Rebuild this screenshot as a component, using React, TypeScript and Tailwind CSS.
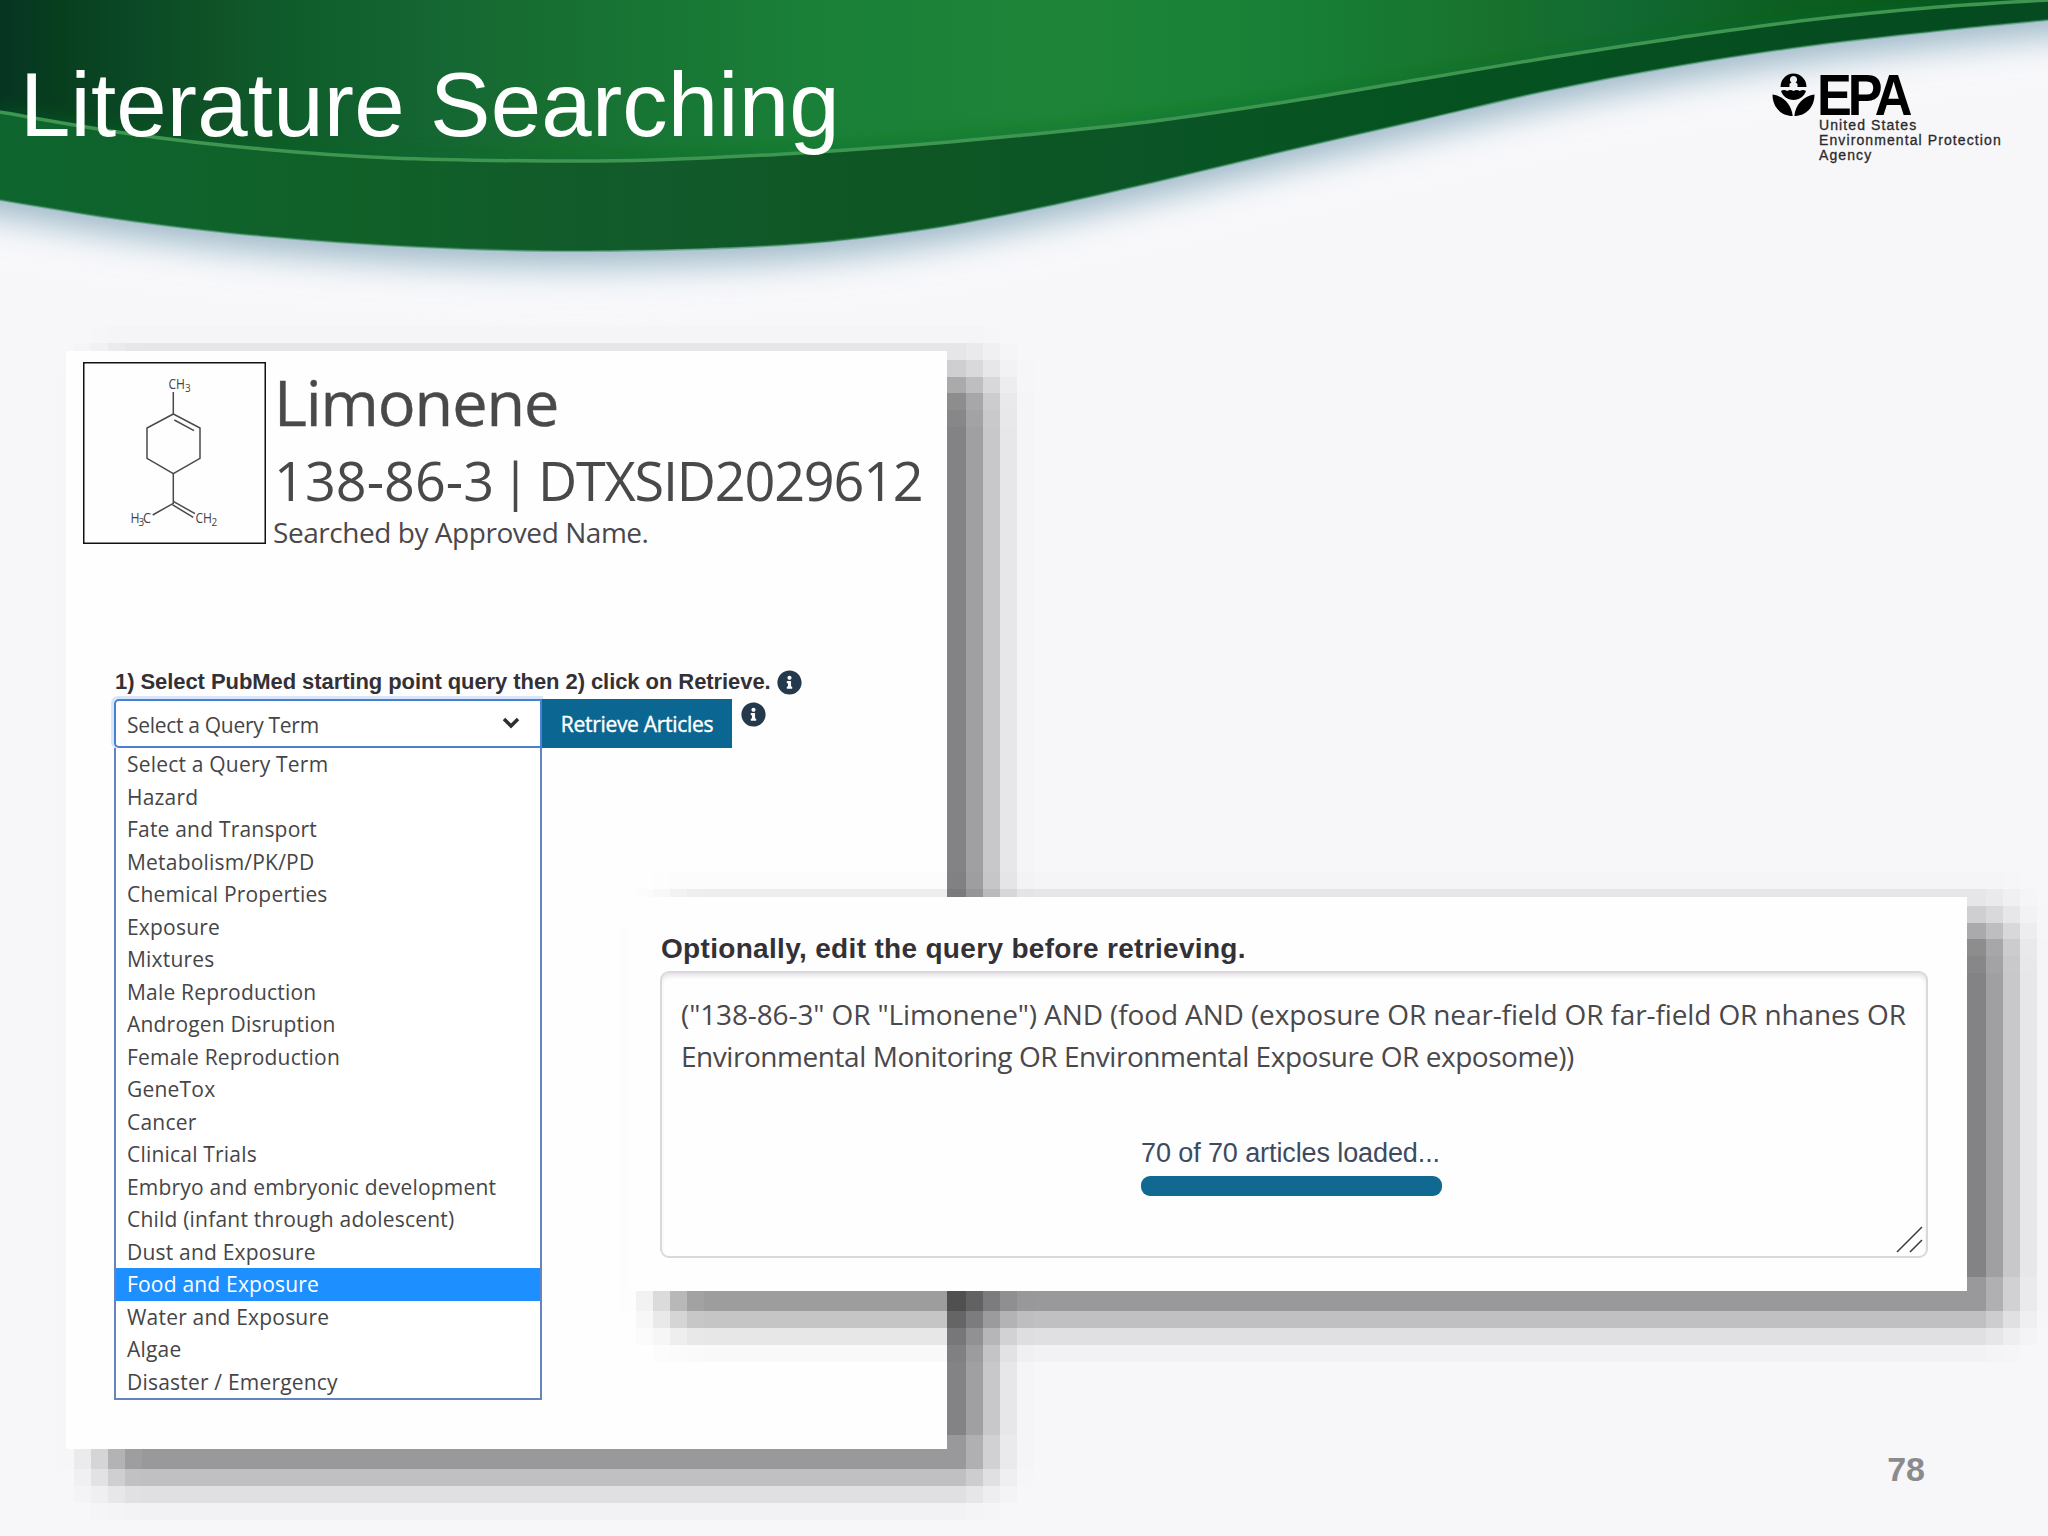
import * as React from "react";
import { FaInfoCircle } from "react-icons/fa";

const QUERY_TERMS = [
  "Select a Query Term",
  "Hazard",
  "Fate and Transport",
  "Metabolism/PK/PD",
  "Chemical Properties",
  "Exposure",
  "Mixtures",
  "Male Reproduction",
  "Androgen Disruption",
  "Female Reproduction",
  "GeneTox",
  "Cancer",
  "Clinical Trials",
  "Embryo and embryonic development",
  "Child (infant through adolescent)",
  "Dust and Exposure",
  "Food and Exposure",
  "Water and Exposure",
  "Algae",
  "Disaster / Emergency",
];

const SELECTED_TERM = "Food and Exposure";

type Point = [number, number];

const OUTER_EDGE: Point[] = [
  [0, 200],
  [131, 221],
  [261, 236],
  [420, 247],
  [588, 251],
  [784, 245],
  [914, 231],
  [1024, 211],
  [1155, 182],
  [1285, 151],
  [1416, 121],
  [1546, 91],
  [1677, 66],
  [1808, 46],
  [1938, 31],
  [2048, 20],
];

const INNER_EDGE: Point[] = [
  [0, 112],
  [131, 134],
  [261, 149],
  [392, 158],
  [549, 161],
  [653, 160],
  [784, 154],
  [914, 145],
  [1024, 135],
  [1155, 121],
  [1285, 102],
  [1416, 80],
  [1546, 58],
  [1677, 38],
  [1808, 20],
  [1938, 7],
  [2048, 0],
];

// Catmull-Rom spline through the points, as cubic segments
function smoothPath(points: Point[]) {
  const segments = points.slice(0, -1).map((p1, i) => {
    const p0 = points[i - 1] ?? p1;
    const p2 = points[i + 1];
    const p3 = points[i + 2] ?? p2;

    const c1 = [p1[0] + (p2[0] - p0[0]) / 6, p1[1] + (p2[1] - p0[1]) / 6];
    const c2 = [p2[0] - (p3[0] - p1[0]) / 6, p2[1] - (p3[1] - p1[1]) / 6];
    return `C${c1.join(" ")} ${c2.join(" ")} ${p2.join(" ")}`;
  });

  return `M${points[0].join(" ")} ${segments.join(" ")}`;
}

type Step = [alpha: number, until: string];

function stepGradient(direction: string, steps: Step[]) {
  let from = "0px";
  const stops = steps.map(([alpha, until]) => {
    const stop = `rgba(0,0,0,${alpha}) ${from} ${until}`;
    from = until;
    return stop;
  });
  return `linear-gradient(${direction}, ${stops.join(", ")})`;
}

const SHADOW_MASK = [
  stepGradient("to right", [
    [0.01, "17px"],
    [0.12, "34px"],
    [0.36, "51px"],
    [0.72, "68px"],
    [0.95, "85px"],
    [1, "calc(100% - 68px)"],
    [0.75, "calc(100% - 51px)"],
    [0.4, "calc(100% - 34px)"],
    [0.13, "calc(100% - 17px)"],
    [0.02, "100%"],
  ]),
  stepGradient("to bottom", [
    [0.02, "17px"],
    [0.14, "34px"],
    [0.34, "51px"],
    [0.66, "67px"],
    [0.91, "84px"],
    [0.97, "101px"],
    [1, "calc(100% - 85px)"],
    [0.81, "calc(100% - 51px)"],
    [0.48, "calc(100% - 34px)"],
    [0.19, "calc(100% - 17px)"],
    [0.04, "100%"],
  ]),
].join(", ");

function BlockShadow() {
  return (
    <div
      className="absolute -z-10 -left-[9px] -top-[25px] -right-[87px] -bottom-[71px] bg-black/47 [mask-composite:intersect]"
      style={{ maskImage: SHADOW_MASK }}
    />
  );
}

function Swoosh() {
  const outer = smoothPath(OUTER_EDGE);
  const inner = smoothPath(INNER_EDGE);

  return (
    <svg
      className="absolute inset-0 -z-10 h-[340px] w-[2048px]"
      viewBox="0 0 2048 340"
      fill="none"
    >
      <defs>
        <linearGradient id="top" x1="0" y1="0" x2="2048" y2="0" gradientUnits="userSpaceOnUse">
          <stop offset="0" stopColor="#063523" />
          <stop offset="0.03" stopColor="#073f1e" />
          <stop offset="0.06" stopColor="#0a4825" />
          <stop offset="0.11" stopColor="#105427" />
          <stop offset="0.15" stopColor="#0f5e2c" />
          <stop offset="0.22" stopColor="#156733" />
          <stop offset="0.26" stopColor="#176e31" />
          <stop offset="0.33" stopColor="#187735" />
          <stop offset="0.4" stopColor="#1a8038" />
          <stop offset="0.52" stopColor="#1e8538" />
          <stop offset="0.63" stopColor="#178036" />
          <stop offset="0.73" stopColor="#18722d" />
          <stop offset="0.79" stopColor="#126a33" />
          <stop offset="0.87" stopColor="#0d5f22" />
          <stop offset="1" stopColor="#04501a" />
        </linearGradient>
        <linearGradient id="band" x1="0" y1="0" x2="2048" y2="0" gradientUnits="userSpaceOnUse">
          <stop offset="0" stopColor="#0e652e" />
          <stop offset="0.18" stopColor="#106028" />
          <stop offset="0.32" stopColor="#125a2b" />
          <stop offset="0.42" stopColor="#0e5724" />
          <stop offset="0.55" stopColor="#0b5526" />
          <stop offset="0.68" stopColor="#055320" />
          <stop offset="1" stopColor="#054a20" />
        </linearGradient>
        <filter id="soft" x="-10%" y="-20%" width="120%" height="150%">
          <feGaussianBlur stdDeviation="17" />
        </filter>
        <filter id="glow" x="-10%" y="-20%" width="120%" height="150%">
          <feGaussianBlur stdDeviation="24" />
        </filter>
        <filter id="shade" x="-10%" y="-20%" width="120%" height="150%">
          <feGaussianBlur stdDeviation="7" />
        </filter>
        <clipPath id="inside">
          <path d={`${inner} L2048 0 L0 0 Z`} />
        </clipPath>
      </defs>
      <g transform="translate(0 36)" filter="url(#glow)">
        <path d={`${outer} L2148 0 L2148 -90 L-100 -90 L-100 190 Z`} fill="#fdfeff" />
      </g>
      <g transform="translate(0 17)" filter="url(#soft)">
        <path
          d={`${outer} L2148 14 L2148 -90 L-100 -90 L-100 184 Z`}
          fill="#8faebf"
          fillOpacity="0.85"
        />
      </g>
      <path d={`${outer} L2048 0 L0 0 Z`} fill="url(#band)" />
      <path d={`${inner} L2048 0 L0 0 Z`} fill="url(#top)" />
      <g clipPath="url(#inside)">
        <path d={inner} stroke="#0a6a14" strokeOpacity="0.3" strokeWidth="16" filter="url(#shade)" />
      </g>
      <path d={inner} stroke="#3f9650" strokeWidth="3.5" />
      <path d={outer} stroke="#3d8f62" strokeOpacity="0.55" strokeWidth="2" />
    </svg>
  );
}

function EpaLogo() {
  return (
    <div className="flex gap-[4px] font-['Liberation_Sans',sans-serif] text-black">
      <svg className="mt-[1px] h-[43px] w-[43px] shrink-0" viewBox="0 0 43 43">
        <path
          d="M8.5 14 A13 13.500 0 0 1 34.5 14 H25.500 V11 Q24.500 9.800 23.500 9.500 A3.600 3.600 0 1 0 19.500 9.500 Q18.500 9.800 17.500 11 V14 Z"
          fill="#000"
        />
        <path
          d="M9 18 Q12 16 15.2 18 Q18.400 16 21.500 18 Q24.600 16 27.800 18 Q31 16 34 18 C32 23.500 27.500 27 21.500 27 C15.500 27 11 23.500 9 18 Z"
          fill="#000"
        />
        <path d="M0.500 21.500 C11 23 19.500 31 20.700 43 C9 43 0.500 34 0.500 21.500 Z" fill="#000" />
        <path d="M42.500 21.500 C32 23 23.500 31 22.300 43 C34 43 42.500 34 42.500 21.500 Z" fill="#000" />
      </svg>
      <div>
        <p className="-ml-[2px] h-[45px] w-[98px] origin-left scale-x-[0.9] text-[58px] leading-[46px] font-bold tracking-[-4.5px]">
          EPA
        </p>
        <p className="pt-[1px] text-[14px] leading-[15px] tracking-[1.1px] whitespace-nowrap text-[#2a2a2a] [-webkit-text-stroke:0.3px_#2a2a2a]">
          United States
          <br />
          Environmental Protection
          <br />
          Agency
        </p>
      </div>
    </div>
  );
}

function Structure() {
  return (
    <svg
      className="h-[182px] w-[183px] shrink-0 font-['Open_Sans',sans-serif]"
      viewBox="0 0 183 182"
      fill="none"
    >
      <rect x="0.75" y="0.75" width="181.500" height="180.500" stroke="#111" strokeWidth="1.500" />
      <g stroke="#4a4a4a" strokeWidth="1.500">
        <path d="M90.300 30V52L117 66V96.300L90.300 111.700L64 96.300V66L90.300 52" />
        <path d="M91.300 58L111 68.700" />
        <path d="M90.300 111.700V141.300L69.700 153" />
        <path d="M90.300 139.300L112 151.700M89.300 142.700L110.300 155.300" />
      </g>
      <g fill="#444" fontSize="14">
        <text x="85.500" y="27" textLength="16.500" lengthAdjust="spacingAndGlyphs">
          CH
        </text>
        <text x="102" y="30" fontSize="10">
          3
        </text>
        <text x="47.500" y="161" textLength="9" lengthAdjust="spacingAndGlyphs">
          H
        </text>
        <text x="55.500" y="164" fontSize="10">
          3
        </text>
        <text x="60" y="161" textLength="8" lengthAdjust="spacingAndGlyphs">
          C
        </text>
        <text x="112.500" y="161" textLength="16.500" lengthAdjust="spacingAndGlyphs">
          CH
        </text>
        <text x="128.500" y="164" fontSize="10">
          2
        </text>
      </g>
    </svg>
  );
}

function QuerySelect() {
  return (
    <div className="w-[428px] text-[21px] text-[#454548]">
      <div className="flex h-[49px] items-center justify-between rounded-l-[5px] border-2 border-[#4a80d0] bg-white pr-[20px] pl-[11px] shadow-[-1px_-1px_0_2px_#d8e6fa]">
        <span className="pt-[4px] tracking-[-0.3px]">Select a Query Term</span>
        <svg className="mb-[1px] h-[12px] w-[18px]" viewBox="0 0 18 12" fill="none">
          <path d="M2 2L9 9L16 2" stroke="#2f2f33" strokeWidth="3.500" />
        </svg>
      </div>
      <ul className="border-2 border-t-0 border-[#6484c0] bg-white tracking-[0.2px]">
        {QUERY_TERMS.map((term) => (
          <li
            key={term}
            className={
              term === SELECTED_TERM
                ? "h-[32.5px] bg-[#1e8fff] pl-[11px] leading-[32.5px] text-white"
                : "h-[32.5px] pl-[11px] leading-[32.5px]"
            }
          >
            {term}
          </li>
        ))}
      </ul>
    </div>
  );
}

function ChemicalCard() {
  return (
    <section className="relative isolate h-[1098px] w-[881px] shrink-0">
      <BlockShadow />
      <div className="h-full bg-[#fefeff] pt-[11px] pl-[17px] font-['Open_Sans',sans-serif] text-[#4a484b]">
        <div className="flex gap-[7px] whitespace-nowrap">
          <Structure />
          <div>
            <h2 className="pl-[1px] text-[63px] leading-[80px] tracking-[-1.1px] [-webkit-text-stroke:0.4px_#4a484b]">
              Limonene
            </h2>
            <div className="mt-[3px] flex pl-[1px] text-[54px] leading-[70px]">
              <span>138-86-3</span>
              <span className="w-[44px] text-center -indent-[1px] text-[52px]">|</span>
              <span className="tracking-[-1.2px]">DTXSID2029612</span>
            </div>
            <p className="-mt-[1px] text-[28px] leading-[36px] tracking-[-0.45px]">
              Searched by Approved Name.
            </p>
          </div>
        </div>

        <div className="mt-[119px] flex items-center gap-[6px] pl-[32px]">
          <h3 className="font-['Liberation_Sans',sans-serif] text-[22px] leading-[26px] font-bold tracking-[-0.07px] whitespace-nowrap text-[#333135]">
            1) Select PubMed starting point query then 2) click on Retrieve.
          </h3>
          <FaInfoCircle className="mt-[1px] size-[25px] text-[#24394c]" />
        </div>
        <div className="mt-[4px] flex items-start pl-[31px]">
          <QuerySelect />
          <button className="h-[49px] w-[190px] bg-[#0b6792] pt-[3px] text-[21px] tracking-[-0.3px] text-white [-webkit-text-stroke:0.4px_white]">
            Retrieve Articles
          </button>
          <FaInfoCircle className="mt-[3px] ml-[9px] size-[25px] text-[#24394c]" />
        </div>
      </div>
    </section>
  );
}

function QueryCard() {
  return (
    <section className="relative isolate mt-[546px] -ml-[319px] h-[394px] w-[1339px] shrink-0">
      <BlockShadow />
      <div className="h-full bg-[#fefeff] pt-[34px] pl-[32px]">
        <h3 className="pl-[1px] font-['Liberation_Sans',sans-serif] text-[28px] leading-[36px] font-bold tracking-[0.32px] text-[#333135]">
          Optionally, edit the query before retrieving.
        </h3>
        <div className="relative mt-[4px] flex h-[287px] w-[1268px] flex-col rounded-[9px] border-2 border-[#dad8dc] pt-[20px] pl-[19px] shadow-[inset_0_4px_4px_-1px_#e4e2e5]">
          <p className="font-['Open_Sans',sans-serif] text-[28px] leading-[42.3px] tracking-[-0.45px] whitespace-nowrap text-[#4a484b]">
            <span className="tracking-[-0.12px]">
              (&quot;138-86-3&quot; OR &quot;Limonene&quot;) AND (food AND (exposure OR near-field OR
              far-field OR nhanes OR
            </span>
            <br />
            Environmental Monitoring OR Environmental Exposure OR exposome))
          </p>
          <div className="mt-[58px] ml-[460px] w-[301px]">
            <p className="font-['Liberation_Sans',sans-serif] text-[27px] leading-[35px] tracking-[-0.1px] whitespace-nowrap text-[#3d4b60]">
              70 of 70 articles loaded...
            </p>
            <div className="mt-[5px] h-[20px] rounded-[9px] bg-[#116891]" />
          </div>
          <svg
            className="absolute right-[2px] bottom-[2px] size-[28px]"
            viewBox="0 0 28 28"
            fill="none"
          >
            <path d="M1 26L26 1M14 26L26 14" stroke="#3a3a3e" strokeWidth="1.500" />
          </svg>
        </div>
      </div>
    </section>
  );
}

export default function App() {
  return (
    <div className="isolate relative h-[1536px] w-[2048px] overflow-hidden bg-[#f7f6f9]">
      <Swoosh />
      <header className="flex h-[351px] justify-between pl-[20px]">
        <h1 className="pt-[55px] font-['Liberation_Sans',sans-serif] text-[90.6px] leading-[100px] tracking-[0.2px] whitespace-nowrap text-white">
          Literature Searching
        </h1>
        <div className="w-[276px] pt-[72px]">
          <EpaLogo />
        </div>
      </header>
      <main className="flex items-start pl-[66px]">
        <ChemicalCard />
        <QueryCard />
      </main>
      <footer className="flex justify-end pr-[123px]">
        <span className="font-['Liberation_Sans',sans-serif] text-[34px] leading-[41px] font-bold text-[#8b8a8d]">
          78
        </span>
      </footer>
    </div>
  );
}
